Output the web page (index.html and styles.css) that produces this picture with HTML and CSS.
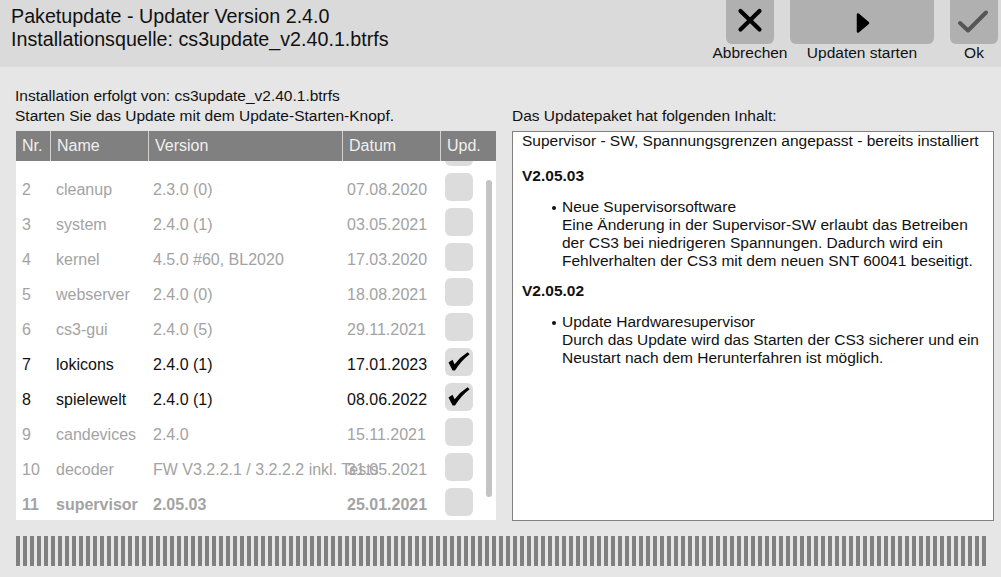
FILE: index.html
```html
<!DOCTYPE html>
<html lang="de">
  <head>
    <meta charset="UTF-8" />
    <meta name="viewport" content="width=device-width, initial-scale=1.0" />
    <title>Paketupdate</title>
    <link rel="stylesheet" href="styles.css">
  </head>
  <body>
    <header class="topbar">
      <div class="title">
        <div>Paketupdate - Updater Version 2.4.0</div>
        <div>Installationsquelle: cs3update_v2.40.1.btrfs</div>
      </div>

      <nav class="actions">
        <div class="action action-small">
          <button class="btn" aria-label="Abbrechen">
            <svg width="48" height="44" viewBox="0 0 48 44">
              <path d="M14.5 11 L33.5 29.5 M33.5 11 L14.5 29.5" stroke="#000" stroke-width="4.2" stroke-linecap="round" fill="none" />
            </svg>
          </button>
          <span class="action-label">Abbrechen</span>
        </div>
        <div class="action action-wide">
          <button class="btn" aria-label="Updaten starten">
            <svg width="144" height="44" viewBox="0 0 144 44">
              <path d="M68 14.5 L78 23 L68 31.5 Z" fill="#000" stroke="#000" stroke-width="2.5" stroke-linejoin="round" />
            </svg>
          </button>
          <span class="action-label">Updaten starten</span>
        </div>
        <div class="action action-small">
          <button class="btn" aria-label="Ok">
            <svg width="48" height="44" viewBox="0 0 48 44">
              <path d="M10 23 L18 30.5 L36 12.5" stroke="#555" stroke-width="4" stroke-linecap="round" stroke-linejoin="round" fill="none" />
            </svg>
          </button>
          <span class="action-label">Ok</span>
        </div>
      </nav>
    </header>

    <div class="content">
      <section class="panel panel-left">
        <p class="intro intro-shift">
          Installation erfolgt von: cs3update_v2.40.1.btrfs<br />
          Starten Sie das Update mit dem Update-Starten-Knopf.
        </p>

        <div class="pkg-table">
          <div class="pkg-head">
            <span>Nr.</span>
            <span>Name</span>
            <span>Version</span>
            <span>Datum</span>
            <span>Upd.</span>
          </div>

          <div class="pkg-body">
            <div class="pkg-rows">
              <div class="pkg-row">
                <span></span><span></span><span></span><span></span>
                <div class="check"></div>
              </div>
              <div class="pkg-row">
                <span>2</span><span>cleanup</span><span>2.3.0 (0)</span><span>07.08.2020</span>
                <div class="check"></div>
              </div>
              <div class="pkg-row">
                <span>3</span><span>system</span><span>2.4.0 (1)</span><span>03.05.2021</span>
                <div class="check"></div>
              </div>
              <div class="pkg-row">
                <span>4</span><span>kernel</span><span>4.5.0 #60, BL2020</span><span>17.03.2020</span>
                <div class="check"></div>
              </div>
              <div class="pkg-row">
                <span>5</span><span>webserver</span><span>2.4.0 (0)</span><span>18.08.2021</span>
                <div class="check"></div>
              </div>
              <div class="pkg-row">
                <span>6</span><span>cs3-gui</span><span>2.4.0 (5)</span><span>29.11.2021</span>
                <div class="check"></div>
              </div>
              <div class="pkg-row active">
                <span>7</span><span>lokicons</span><span>2.4.0 (1)</span><span>17.01.2023</span>
                <div class="check">
                  <svg width="28" height="28" viewBox="0 0 28 28">
                    <path d="M3.5 14.5 L7.5 11.8 L9.6 16.2 Q15 9 22.6 4.2 L24.6 6.2 Q15.8 13 10 22.6 L7.6 22.6 Z" fill="#000" />
                  </svg>
                </div>
              </div>
              <div class="pkg-row active">
                <span>8</span><span>spielewelt</span><span>2.4.0 (1)</span><span>08.06.2022</span>
                <div class="check">
                  <svg width="28" height="28" viewBox="0 0 28 28">
                    <path d="M3.5 14.5 L7.5 11.8 L9.6 16.2 Q15 9 22.6 4.2 L24.6 6.2 Q15.8 13 10 22.6 L7.6 22.6 Z" fill="#000" />
                  </svg>
                </div>
              </div>
              <div class="pkg-row">
                <span>9</span><span>candevices</span><span>2.4.0</span><span>15.11.2021</span>
                <div class="check"></div>
              </div>
              <div class="pkg-row">
                <span>10</span><span>decoder</span><span>FW V3.2.2.1 / 3.2.2.2 inkl. Tests</span><span>31.05.2021</span>
                <div class="check"></div>
              </div>
              <div class="pkg-row pending">
                <span>11</span><span>supervisor</span><span>2.05.03</span><span>25.01.2021</span>
                <div class="check"></div>
              </div>
            </div>
            <div class="scrollbar"></div>
          </div>
        </div>
      </section>

      <section class="panel panel-right">
        <p class="intro intro-single">Das Updatepaket hat folgenden Inhalt:</p>

        <div class="notes">
          <p>Supervisor - SW, Spannungsgrenzen angepasst - bereits installiert</p>

          <h4>V2.05.03</h4>
          <ul>
            <li>
              Neue Supervisorsoftware<br />
              Eine Änderung in der Supervisor-SW erlaubt das Betreiben<br />
              der CS3 bei niedrigeren Spannungen. Dadurch wird ein<br />
              Fehlverhalten der CS3 mit dem neuen SNT 60041 beseitigt.
            </li>
          </ul>

          <h4>V2.05.02</h4>
          <ul>
            <li>
              Update Hardwaresupervisor<br />
              Durch das Update wird das Starten der CS3 sicherer und ein<br />
              Neustart nach dem Herunterfahren ist möglich.
            </li>
          </ul>
        </div>
      </section>
    </div>

    <div class="progress"></div>
  </body>
</html>
```

FILE: styles.css
```css
html {
  font-family: "Liberation Sans", Arial, sans-serif;
}

body {
  margin: 0;
  width: 1001px;
  height: 577px;
  overflow: hidden;
  background: #e6e6e6;
  color: #111;
}

/* top bar with title and the three action buttons */
.topbar {
  display: flex;
  justify-content: space-between;
  height: 67px;
  background: #dadada;
}

.title {
  padding: 5px 0 0 11px;
  font-size: 19.7px;
  line-height: 23px;
}

.actions {
  display: flex;
  gap: 16px;
  padding-right: 3px;
}

.action {
  display: flex;
  flex-direction: column;
  align-items: center;
  min-width: 0;
}

.action-small {
  width: 48px;
}

.action-wide {
  width: 144px;
}

.btn {
  display: flex;
  align-items: center;
  justify-content: center;
  width: 100%;
  height: 44px;
  padding: 0;
  border: 0;
  border-radius: 0 0 6px 6px;
  background: #b0b0b0;
}

.action-label {
  white-space: nowrap;
  font-size: 15.5px;
  line-height: 18px;
}

/* two panels */
.content {
  display: flex;
  gap: 16px;
  padding: 19px 7px 0 16px;
}

.panel {
  display: flex;
  flex-direction: column;
}

.panel-left {
  width: 480px;
}

.panel-right {
  width: 482px;
}

.intro {
  margin: 0;
  font-size: 15.5px;
  line-height: 20px;
}

.intro-shift {
  margin-left: -1px;
}

.intro-single {
  padding-top: 20px;
}

/* package table */
.pkg-table {
  margin-top: 5px;
  background: #fff;
}

.pkg-head,
.pkg-row {
  display: grid;
  grid-template-columns: 34px 98px 194px 98px 56px;
  font-size: 16px;
}

.pkg-head {
  height: 30px;
  line-height: 30px;
  background: #808080;
  color: #f0f0f0;
}

.pkg-head span {
  padding-left: 6px;
}

.pkg-head span + span {
  border-left: 1px solid #d2d2d2;
}

.pkg-body {
  position: relative;
  height: 359px;
  overflow: hidden;
}

.pkg-rows {
  margin-top: -27px;
}

.pkg-row {
  height: 35px;
  align-items: center;
  color: #a3a3a3;
}

.pkg-row span {
  margin-top: 7px;
  padding-left: 6px;
  line-height: 20px;
  white-space: nowrap;
}

.pkg-row span:nth-child(3),
.pkg-row span:nth-child(4) {
  padding-left: 5px;
}

.pkg-row.active {
  color: #111;
}

.pkg-row.pending {
  font-weight: bold;
}

.check {
  display: flex;
  align-items: center;
  justify-content: center;
  width: 28px;
  height: 28px;
  margin-left: 5px;
  border-radius: 6px;
  background: #dcdcdc;
}

.scrollbar {
  position: absolute;
  left: 470px;
  top: 19px;
  width: 6px;
  height: 317px;
  border-radius: 3px;
  background: #c4c4c4;
}

/* release notes box */
.notes {
  margin-top: 5px;
  height: 388px;
  padding: 0 9px;
  border: 1px solid #808080;
  background: #fff;
  font-size: 15.5px;
  color: #111;
}

.notes p {
  margin: 0 0 17px;
}

.notes h4 {
  margin: 12px 0 13px;
  font-size: 15.5px;
}

.notes ul {
  margin: 0;
  padding-left: 40px;
  list-style: none;
}

.notes li {
  position: relative;
  white-space: nowrap;
}

/* small bullet dot like the device renders it */
.notes li::before {
  content: "";
  position: absolute;
  left: -10px;
  top: 8px;
  width: 4px;
  height: 4px;
  border-radius: 50%;
  background: #111;
}

/* striped progress bar */
.progress {
  width: 970px;
  height: 30px;
  margin: 15px 0 0 16px;
  background: repeating-linear-gradient(90deg, #808080 0 4px, transparent 4px 7px);
}
```
